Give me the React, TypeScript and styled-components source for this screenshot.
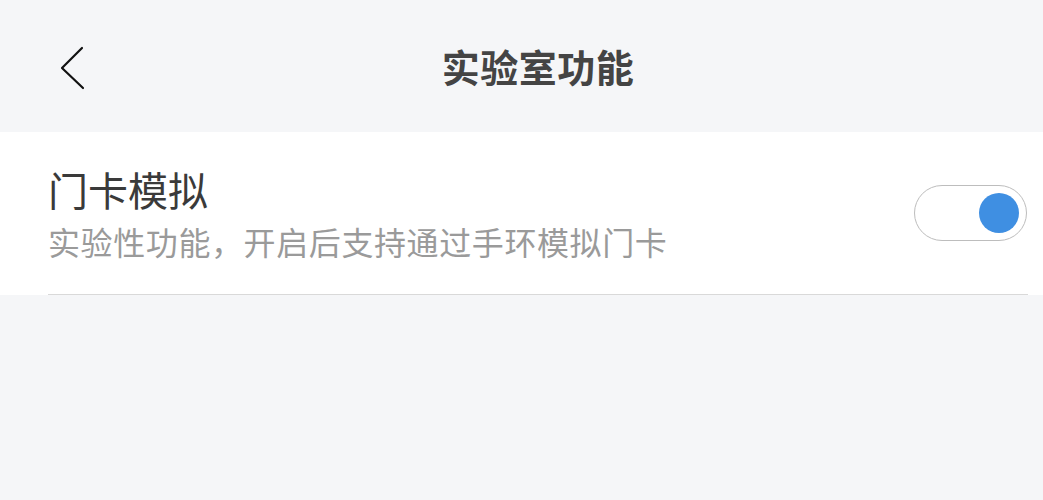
import React, { useState } from "react";
import styled, { createGlobalStyle } from "styled-components";

const GlobalStyle = createGlobalStyle`
  html, body {
    margin: 0;
    padding: 0;
    background: #f5f6f8;
    font-family: "Noto Sans CJK SC", "Noto Sans", sans-serif;
  }
`;

export default function App() {
  const [on, setOn] = useState(true);
  return (
    <StyledPage>
      <GlobalStyle />
      <StyledHeader>
        <StyledBack aria-label="返回">
          <svg width="32" height="48" viewBox="0 0 32 48">
            <path d="M26 6 L6 26 L27 46" fill="none" stroke="#111" strokeWidth="2.2" strokeLinecap="round" strokeLinejoin="round" />
          </svg>
        </StyledBack>
        <StyledTitle>{"实验室功能"}</StyledTitle>
        <div />
      </StyledHeader>
      <StyledSection>
        <StyledRow>
          <StyledText>
            <StyledLabel>{"门卡模拟"}</StyledLabel>
            <StyledHint>{"实验性功能，开启后支持通过手环模拟门卡"}</StyledHint>
          </StyledText>
          <StyledToggle $on={on} onClick={() => setOn(!on)}>
            <StyledKnob $on={on} />
          </StyledToggle>
        </StyledRow>
      </StyledSection>
    </StyledPage>
  );
}

const StyledPage = styled.div`
  width: 1043px;
  min-height: 500px;
  background: #f5f6f8;
`;

const StyledHeader = styled.div`
  display: grid;
  grid-template-columns: 120px 1fr 87px;
  align-items: center;
  height: 132px;
`;

const StyledBack = styled.div`
  display: flex;
  align-items: center;
  padding-left: 56px;
  height: 48px;
  cursor: pointer;
`;

const StyledTitle = styled.div`
  text-align: center;
  font-size: 38px;
  line-height: 48px;
  font-weight: 700;
  color: #444444;
  letter-spacing: 0.5px;
`;

const StyledSection = styled.div`
  background: #ffffff;
  padding: 0 15px 0 48px;
`;

const StyledRow = styled.div`
  display: flex;
  align-items: center;
  justify-content: space-between;
  height: 162px;
  border-bottom: 1px solid #d9d9d9;
`;

const StyledText = styled.div`
  display: flex;
  flex-direction: column;
  gap: 8px;
`;

const StyledLabel = styled.div`
  font-size: 40px;
  line-height: 48px;
  color: #3a3a3a;
`;

const StyledHint = styled.div`
  font-size: 32px;
  line-height: 40px;
  letter-spacing: 0.6px;
  color: #9a9a9a;
`;

const StyledToggle = styled.div<{ $on: boolean }>`
  display: flex;
  align-items: center;
  justify-content: ${(p) => (p.$on ? "flex-end" : "flex-start")};
  box-sizing: border-box;
  width: 113px;
  height: 56px;
  margin-right: 1px;
  padding: 0 7px;
  border: 1px solid #bdbdbd;
  border-radius: 28px;
  background: #ffffff;
  cursor: pointer;
`;

const StyledKnob = styled.div<{ $on: boolean }>`
  width: 40px;
  height: 40px;
  border-radius: 50%;
  background: ${(p) => (p.$on ? "#3f8fe2" : "#d0d0d0")};
`;
